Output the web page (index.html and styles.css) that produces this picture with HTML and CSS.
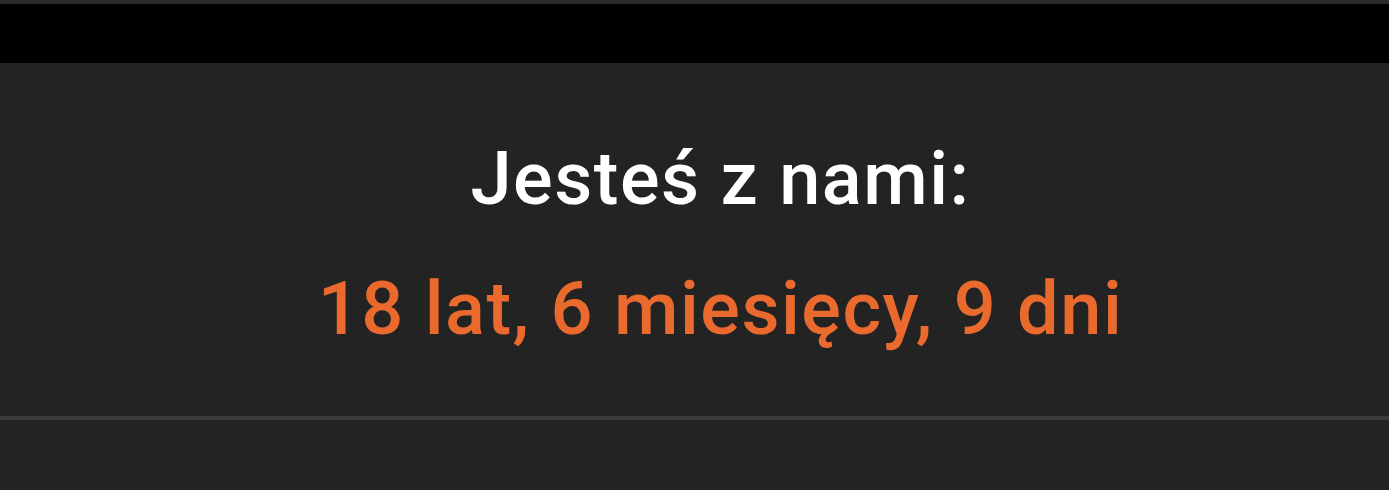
FILE: index.html
```html
<!DOCTYPE html>
<html lang="pl">
<head>
  <meta charset="UTF-8" />
  <meta name="viewport" content="width=device-width, initial-scale=1.0" />
  <title>Jesteś z nami</title>
  <link rel="stylesheet" href="styles.css">
</head>
<body>
  <div class="status-strip"></div>
  <div class="top-bar"></div>
  <section class="membership">
    <h2 class="membership-title">Jesteś z nami:</h2>
    <p class="membership-time">18 lat, 6 miesięcy, 9 dni</p>
  </section>
  <div class="divider"></div>
  <div class="rest"></div>
</body>
</html>
```

FILE: styles.css
```css
* {
  margin: 0;
  padding: 0;
  box-sizing: border-box;
  font-family: Roboto, 'Noto Sans', sans-serif;
}

body {
  background: #232323;
  color: #fff;
  height: 490px;
  overflow: hidden;
}

.status-strip {
  height: 4px;
  background: #2a2a2a;
}

.top-bar {
  height: 59px;
  background: #000;
}

.membership {
  height: 353px;
  display: flex;
  flex-direction: column;
  align-items: center;
  padding-top: 72px;
  padding-left: 52px;
}

.membership-title {
  font-size: 74px;
  font-weight: 500;
  line-height: 87px;
  letter-spacing: 1.5px;
  color: #fff;
}

.membership-time {
  font-size: 74px;
  font-weight: 500;
  line-height: 87px;
  letter-spacing: 1.5px;
  margin-top: 43px;
  color: #ea6a2e;
}

.divider {
  height: 4px;
  background: #3a3a3a;
}
```
